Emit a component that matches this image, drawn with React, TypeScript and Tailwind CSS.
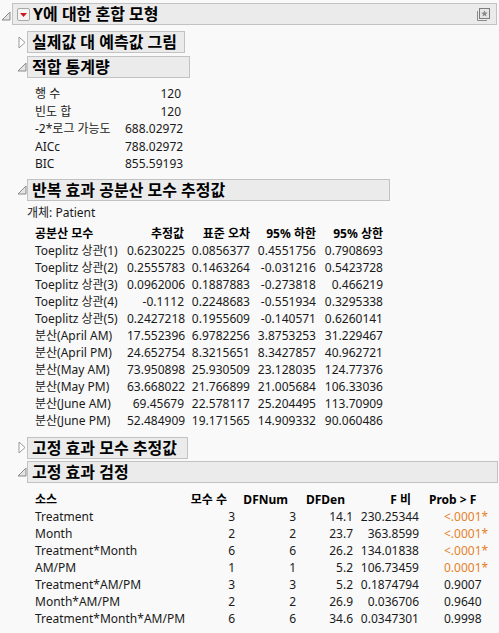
import React from "react";

const FONT = { fontFamily: '"Noto Sans", "Noto Sans CJK KR", sans-serif' };

function OpenTri() {
    return (
        <svg width="10" height="10" viewBox="0 0 10 10" className="shrink-0">
            <polygon points="1,9 9,1 9,9" fill="#e4e4e4" stroke="#8a8a8a" strokeWidth="1" />
        </svg>
    );
}

function ClosedTri() {
    return (
        <svg width="8" height="13" viewBox="0 0 8 13" className="shrink-0">
            <polygon points="1,1 7,6.5 1,12" fill="#ffffff" stroke="#9a9a9a" strokeWidth="1" />
        </svg>
    );
}

function RedMenu() {
    return (
        <svg width="13" height="13" viewBox="0 0 13 13" className="shrink-0">
            <rect x="0.5" y="0.5" width="12" height="12" rx="1.5" fill="#f4f4f4" stroke="#a8a8a8" />
            <polygon points="3,5 10,5 6.5,9" fill="#d6141c" />
        </svg>
    );
}

function StarBox() {
    return (
        <svg width="15" height="15" viewBox="0 0 15 15">
            <path d="M1.5 4 V13.5 H11" fill="none" stroke="#8c8c8c" strokeWidth="1" />
            <rect x="3.5" y="1.5" width="10" height="10" fill="#e6e6e6" stroke="#7d7d7d" />
            <polygon
                points="8.5,3.2 9.4,5.6 11.8,5.7 9.9,7.2 10.6,9.6 8.5,8.2 6.4,9.6 7.1,7.2 5.2,5.7 7.6,5.6"
                fill="#8a8a8a"
            />
        </svg>
    );
}

function Section({ title, open, boxW, children }: { title: string; open: boolean; boxW: string; children?: React.ReactNode }) {
    return (
        <div>
            <div className="flex items-center">
                <div className="w-[11px] flex justify-center">{open ? <OpenTri /> : <ClosedTri />}</div>
                <div className={`${boxW} h-[22px] bg-[#ebebeb] border border-[#c2c2c2] flex items-center pl-[4px] text-[16px] font-bold text-black whitespace-nowrap`}>
                    {title}
                </div>
            </div>
            {children}
        </div>
    );
}

const stats = [
    ["행 수", "120"],
    ["빈도 합", "120"],
    ["-2*로그 가능도", "688.02972"],
    ["AICc", "788.02972"],
    ["BIC", "855.59193"],
];

const cov = [
    ["Toeplitz 상관(1)", "0.6230225", "0.0856377", "0.4551756", "0.7908693"],
    ["Toeplitz 상관(2)", "0.2555783", "0.1463264", "-0.031216", "0.5423728"],
    ["Toeplitz 상관(3)", "0.0962006", "0.1887883", "-0.273818", "0.466219"],
    ["Toeplitz 상관(4)", "-0.1112", "0.2248683", "-0.551934", "0.3295338"],
    ["Toeplitz 상관(5)", "0.2427218", "0.1955609", "-0.140571", "0.6260141"],
    ["분산(April AM)", "17.552396", "6.9782256", "3.8753253", "31.229467"],
    ["분산(April PM)", "24.652754", "8.3215651", "8.3427857", "40.962721"],
    ["분산(May AM)", "73.950898", "25.930509", "23.128035", "124.77376"],
    ["분산(May PM)", "63.668022", "21.766899", "21.005684", "106.33036"],
    ["분산(June AM)", "69.45679", "22.578117", "25.204495", "113.70909"],
    ["분산(June PM)", "52.484909", "19.171565", "14.909332", "90.060486"],
];

const fixed = [
    ["Treatment", "3", "3", "14.1", "230.25344", "<.0001*", true],
    ["Month", "2", "2", "23.7", "363.8599", "<.0001*", true],
    ["Treatment*Month", "6", "6", "26.2", "134.01838", "<.0001*", true],
    ["AM/PM", "1", "1", "5.2", "106.73459", "0.0001*", true],
    ["Treatment*AM/PM", "3", "3", "5.2", "0.1874794", "0.9007", false],
    ["Month*AM/PM", "2", "2", "26.9", "0.036706", "0.9640", false],
    ["Treatment*Month*AM/PM", "6", "6", "34.6", "0.0347301", "0.9998", false],
] as const;

export default function App() {
    return (
        <div className="min-h-screen bg-[#f9f9f9] text-[#1a1a1a] text-[12px] overflow-hidden" style={FONT}>
            {/* top outline */}
            <div className="flex items-center pt-[3px] pr-[2px]">
                <div className="w-[12px] flex justify-center pt-[4px]"><OpenTri /></div>
                <div className="flex-1 h-[22px] bg-[#ebebeb] border border-[#c2c2c2] flex items-center pl-[4px] pr-[5px] gap-[3px]">
                    <RedMenu />
                    <span className="text-[16px] font-bold text-black">Y에 대한 혼합 모형</span>
                    <span className="ml-auto flex"><StarBox /></span>
                </div>
            </div>

            <div className="pl-[16px] pr-[1px]">
                <div className="mt-[6px]">
                    <Section title="실제값 대 예측값 그림" open={false} boxW="w-[158px]" />
                </div>

                <div className="mt-[3px]">
                    <Section title="적합 통계량" open boxW="w-[163px]">
                        <div className="pl-[19px] pt-[7px] grid grid-cols-[90px_56px]">
                            {stats.map(([k, v]) => (
                                <React.Fragment key={k}>
                                    <div className="h-[17.6px] leading-[17.6px] whitespace-nowrap">{k}</div>
                                    <div className="h-[17.6px] leading-[17.6px] text-right">{v}</div>
                                </React.Fragment>
                            ))}
                        </div>
                    </Section>
                </div>

                <div className="mt-[6px]">
                    <Section title="반복 효과 공분산 모수 추정값" open boxW="w-[363px]">
                        <div className="pl-[11px] pt-[3px] h-[20px] leading-[17px]">개체: Patient</div>
                        <div className="pl-[19px] mt-[4px] grid grid-cols-[92px_57px_66px_66px_67px]">
                            {["공분산 모수", "추정값", "표준 오차", "95% 하한", "95% 상한"].map((h, i) => (
                                <div key={h} className={`h-[17px] leading-[17px] font-bold text-black whitespace-nowrap ${i ? "text-right" : ""}`}>{h}</div>
                            ))}
                            {cov.map((r) =>
                                r.map((c, i) => (
                                    <div key={r[0] + i} className={`h-[17px] leading-[17px] whitespace-nowrap ${i ? "text-right" : ""}`}>{c}</div>
                                ))
                            )}
                        </div>
                    </Section>
                </div>

                <div className="mt-[8px]">
                    <Section title="고정 효과 모수 추정값" open={false} boxW="w-[161px]" />
                </div>

                <div className="mt-[2px]">
                    <Section title="고정 효과 검정" open boxW="flex-1">
                        <div className="pl-[19px] pt-[8px] grid grid-cols-[150px_50px_61px_57px_66px_70px]">
                            <div className="h-[17px] leading-[17px] font-bold text-black">소스</div>
                            <div className="h-[17px] leading-[17px] font-bold text-black text-right pr-[8px] whitespace-nowrap">모수 수</div>
                            <div className="h-[17px] leading-[17px] font-bold text-black text-right pr-[8px]">DFNum</div>
                            <div className="h-[17px] leading-[17px] font-bold text-black text-right pr-[8px]">DFDen</div>
                            <div className="h-[17px] leading-[17px] font-bold text-black text-right pr-[8px] whitespace-nowrap">F 비</div>
                            <div className="h-[17px] leading-[17px] font-bold text-black pl-[10px] whitespace-nowrap">Prob &gt; F</div>
                            {fixed.map((r) => (
                                <React.Fragment key={r[0]}>
                                    <div className="h-[17px] leading-[17px] whitespace-nowrap">{r[0]}</div>
                                    <div className="h-[17px] leading-[17px] text-right">{r[1]}</div>
                                    <div className="h-[17px] leading-[17px] text-right">{r[2]}</div>
                                    <div className="h-[17px] leading-[17px] text-right">{r[3]}</div>
                                    <div className="h-[17px] leading-[17px] text-right">{r[4]}</div>
                                    <div className={`h-[17px] leading-[17px] pl-[25px] ${r[6] ? "text-[#e5822a]" : ""}`}>{r[5]}</div>
                                </React.Fragment>
                            ))}
                        </div>
                    </Section>
                </div>
            </div>
        </div>
    );
}
